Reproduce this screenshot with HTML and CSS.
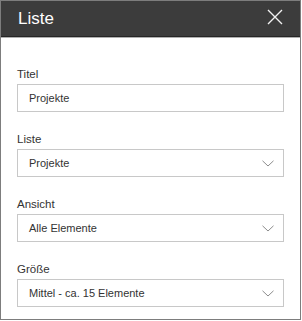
FILE: index.html
```html
<!DOCTYPE html>
<html lang="de">
<head>
<meta charset="utf-8">
<link rel="stylesheet" href="styles.css">
</head>
<body>
<div class="panel">
  <div class="header">
    <span class="title">Liste</span>
    <svg class="close" width="16" height="16" viewBox="0 0 16 16"><path d="M1 1 L15 15 M15 1 L1 15" stroke="#f2f2f2" stroke-width="1.4" fill="none"/></svg>
  </div>
  <div class="content">
    <div class="field">
      <div class="label">Titel</div>
      <div class="box">Projekte</div>
    </div>
    <div class="field">
      <div class="label">Liste</div>
      <div class="box select"><span>Projekte</span><svg class="chev" width="12" height="7" viewBox="0 0 12 7"><path d="M0.5 0.8 L6 6 L11.5 0.8" stroke="#8c8c8c" stroke-width="1" fill="none"/></svg></div>
    </div>
    <div class="field">
      <div class="label">Ansicht</div>
      <div class="box select"><span>Alle Elemente</span><svg class="chev" width="12" height="7" viewBox="0 0 12 7"><path d="M0.5 0.8 L6 6 L11.5 0.8" stroke="#8c8c8c" stroke-width="1" fill="none"/></svg></div>
    </div>
    <div class="field">
      <div class="label">Größe</div>
      <div class="box select"><span>Mittel - ca. 15 Elemente</span><svg class="chev" width="12" height="7" viewBox="0 0 12 7"><path d="M0.5 0.8 L6 6 L11.5 0.8" stroke="#8c8c8c" stroke-width="1" fill="none"/></svg></div>
    </div>
  </div>
</div>
</body>
</html>
```

FILE: styles.css
```css
html, body {
  margin: 0;
  padding: 0;
  background: #ffffff;
}
body {
  font-family: "Liberation Sans", Arial, sans-serif;
}
.panel {
  box-sizing: border-box;
  width: 301px;
  height: 320px;
  border: 1px solid #7d7d7d;
  background: #ffffff;
  display: flex;
  flex-direction: column;
}
.header {
  height: 35px;
  background: #3c3c3c;
  border-bottom: 1px solid #262626;
  box-shadow: 0 1px 0 #b0b0b0;
  display: flex;
  align-items: center;
  justify-content: space-between;
  padding: 0 17px 0 17px;
}
.title {
  color: #ffffff;
  font-size: 17px;
  line-height: 35px;
}
.close {
  display: block;
  margin-top: -3px;
}
.content {
  padding: 29px 16px 0 16px;
  display: flex;
  flex-direction: column;
  gap: 19px;
}
.field {
  display: flex;
  flex-direction: column;
}
.label {
  font-size: 11.5px;
  line-height: 16px;
  color: #333333;
  margin-bottom: 2px;
}
.box {
  box-sizing: border-box;
  height: 28px;
  border: 1px solid #c8c8c8;
  padding: 0 9px 0 11px;
  font-size: 11px;
  color: #333333;
  display: flex;
  align-items: center;
  justify-content: space-between;
}
.chev {
  display: block;
}
```
